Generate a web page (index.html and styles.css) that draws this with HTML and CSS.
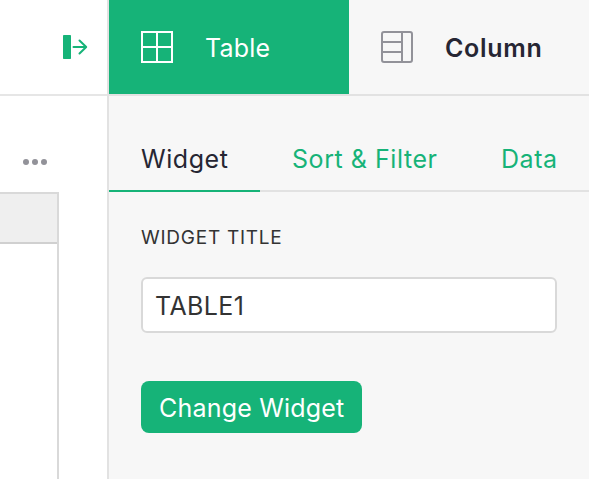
FILE: index.html
```html
<!DOCTYPE html>
<html lang="en">
<head>
<meta charset="utf-8">
<title>Table</title>
<link rel="stylesheet" href="styles.css">
</head>
<body>
<div class="app">
  <main class="page">
    <header class="page-header">
      <svg class="panel-toggle" width="26" height="26" viewBox="0 0 26 26">
        <rect x="1" y="1" width="8" height="24" rx="0.7" fill="#16b378"/>
        <path d="M11.5 13H24M17.5 6.5L24.2 13L17.5 19.5" fill="none" stroke="#16b378" stroke-width="2" stroke-linecap="round" stroke-linejoin="round"/>
      </svg>
    </header>
    <div class="section-title">
      <svg width="24" height="6" viewBox="0 0 24 6" fill="#929299"><circle cx="3" cy="3" r="3"/><circle cx="12" cy="3" r="3"/><circle cx="21" cy="3" r="3"/></svg>
    </div>
    <div class="grid"><div class="grid-header"></div></div>
  </main>
  <aside class="panel">
    <nav class="top-tabs">
      <div class="top-tab active">
        <svg width="32" height="32" viewBox="0 0 32 32" fill="none" stroke="#fff" stroke-width="2"><path d="M1 1H31V31H1ZM16 1V31M1 16H31"/></svg>
        <span class="table-label">Table</span>
      </div>
      <div class="top-tab">
        <svg width="32" height="32" viewBox="0 0 32 32" fill="none" stroke="#929299" stroke-width="2"><rect x="1" y="1" width="30" height="30" rx="2"/><path d="M21 1V31M1 11H21M1 21H21"/></svg>
        <span class="column-label">Column</span>
      </div>
    </nav>
    <nav class="sub-tabs">
      <a class="sub-tab widget active">Widget</a>
      <a class="sub-tab sort">Sort &amp; Filter</a>
      <a class="sub-tab data">Data</a>
    </nav>
    <section class="config">
      <div class="label">WIDGET TITLE</div>
      <div class="field">TABLE1</div>
      <button class="button">Change Widget</button>
    </section>
  </aside>
</div>
</body>
</html>
```
FILE: styles.css
```css
* { box-sizing: border-box; }
body { margin: 0; background: #fff; font-family: Inter, "Liberation Sans", sans-serif; font-size: 25px; line-height: 32px; color: #262633; }
svg { display: block; flex: none; }
.app { display: flex; width: 589px; height: 479px; overflow: hidden; }
.page { width: 107px; display: flex; flex-direction: column; }
.page-header { height: 96px; border-bottom: 2px solid #e6e6e6; display: flex; align-items: center; padding-left: 62px; }
.section-title { height: 96px; padding: 63px 0 0 23px; }
.grid { width: 59px; flex: 1; border-top: 2px solid #d9d9d9; border-right: 2px solid #d9d9d9; }
.grid-header { height: 50px; background: #efefef; border-bottom: 2px solid #d0d0d0; }
.panel { width: 482px; background: #f7f7f7; border-left: 2px solid #e2e2e2; }
.top-tabs { display: flex; height: 96px; border-bottom: 2px solid #e2e2e2; }
.top-tab { width: 240px; display: flex; align-items: center; gap: 32px; padding-left: 32px; white-space: nowrap; }
.top-tab.active { background: #16b378; color: #fff; }
.table-label { letter-spacing: 0.2px; padding-top: 2px; }
.column-label { font-weight: 600; letter-spacing: 0.7px; padding-top: 2px; }
.sub-tabs { display: flex; height: 96px; border-bottom: 2px solid #e2e2e2; }
.sub-tab { height: 96px; padding: 47px 0 0 32px; color: #16b378; letter-spacing: 0.55px; white-space: nowrap; }
.sub-tab.active { color: #262633; border-bottom: 2px solid #16b378; }
.widget { width: 151px; }
.sort { width: 209px; }
.config { padding: 31px 32px 0; display: flex; flex-direction: column; align-items: flex-start; }
.label { height: 54px; font-size: 19px; line-height: 30px; letter-spacing: 0.75px; color: #333; white-space: nowrap; }
.field { width: 416px; height: 56px; padding: 11px 0 0 12px; border: 2px solid #d9d9d9; border-radius: 6px; background: #fff; color: #333; letter-spacing: 0.4px; }
.button { width: 221px; height: 52px; margin-top: 48px; padding: 2px 0 0 18px; border: 0; border-radius: 8px; background: #16b378; color: #fff; font: inherit; letter-spacing: 0.2px; text-align: left; white-space: nowrap; }
```
